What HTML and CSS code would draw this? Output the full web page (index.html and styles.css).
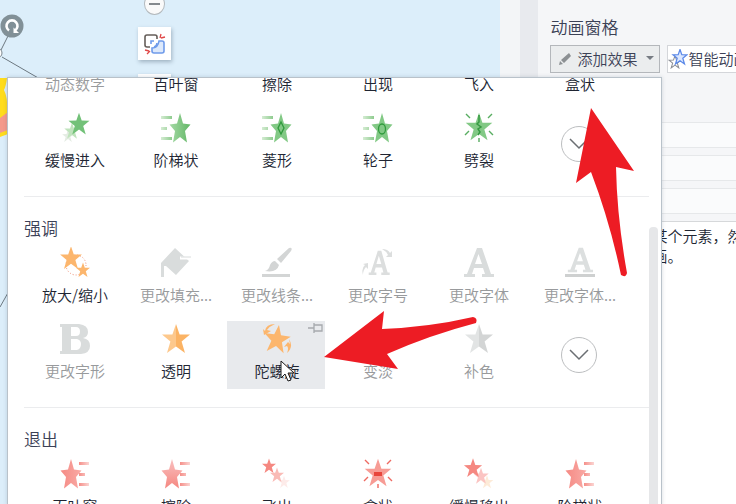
FILE: index.html
```
<!DOCTYPE html>
<html lang="zh-CN">
<head>
  <meta charset="UTF-8">
  <meta name="viewport" content="width=device-width, initial-scale=1.0">
  <title>动画窗格</title>
  <link rel="stylesheet" href="styles.css">
</head>
<body>
  <!-- shared shapes -->
  <svg class="defs" aria-hidden="true">
    <defs>
      <linearGradient id="green" x1="0" x2="1"><stop offset="0" stop-color="#a5d9a5"/><stop offset="1" stop-color="#62b766"/></linearGradient>
      <linearGradient id="orange" x1="0" x2="1"><stop offset=".5" stop-color="#fdc88c"/><stop offset=".5" stop-color="#fbb364"/></linearGradient>
      <linearGradient id="gray" x1="0" x2="1"><stop offset=".5" stop-color="#e2e4e4"/><stop offset=".5" stop-color="#d3d5d5"/></linearGradient>
      <linearGradient id="red" x1="0" x2="1"><stop offset="0" stop-color="#f58a84"/><stop offset="1" stop-color="#f9aaa5"/></linearGradient>
      <linearGradient id="redv" x1="0" y1="0" x2="0" y2="1"><stop offset="0" stop-color="#f9c0c0"/><stop offset="1" stop-color="#f58780"/></linearGradient>
      <linearGradient id="dash-in" gradientUnits="userSpaceOnUse" x1="1" x2="12"><stop offset="0" stop-color="#d5ecd3"/><stop offset="1" stop-color="#8fcc8f"/></linearGradient>
      <linearGradient id="dash-out" gradientUnits="userSpaceOnUse" x1="20" x2="31"><stop offset="0" stop-color="#f58f89"/><stop offset="1" stop-color="#fcdcda"/></linearGradient>
      <path id="star" d="M0 -15L3.6 -4.6L14 -4.4L5.6 2.6L9 14L0 7.4L-9 14L-5.6 2.6L-14 -4.4L-3.6 -4.6Z"/>
      <path id="narrow-star" d="M0 -15L3 -4.6L10.5 -3.6L5 3L7 14.5L0 9L-7 14.5L-5 3L-10.5 -3.6L-3 -4.6Z"/>
      <g id="lines-in" fill="url(#dash-in)"><path d="M1 4h11v3H1zM1 15h6v3H1zM1 25h11v3H1z"/></g>
      <g id="lines-out" fill="url(#dash-out)"><path d="M20 4h10v3H20zM20 15h6v3H20zM20 25h10v3H20z"/></g>
      <path id="rays" fill="none" stroke-width="1.4" d="M3 2l4 4M29 2l-4 4M2 23l4-4M30 23l-4-4M16 26v4"/>
      <path id="letter" d="M14 1h5l9 26h3v3H19v-3h3l-2-6H11l-2 6h3v3H1v-3h3zM15.500 7L12 17h7z"/>
    </defs>
  </svg>

  <main class="workspace">
    <section class="canvas">
      <svg class="slide-art" width="60" height="320" viewBox="0 0 60 320">
        <path d="M9 34L1 50M2 57L40 79M0 307L9 291" stroke="#6c7880" fill="none"/>
        <path d="M0 78h7q-1 8-3 12 4 8 3 20 2 12 1 24l-8 3z" fill="#ffdc1c"/>
        <path d="M0 118l8-6v18l-8 3z" fill="#f4998b"/>
        <circle cx="-3" cy="53" r="5" fill="#fff" stroke="#7a858c"/>
        <circle cx="12" cy="26" r="11.500" fill="#819097"/>
        <path d="M9 30.500A5.500 5.500 0 1 1 15 30.500" fill="none" stroke="#fff" stroke-width="2.600"/>
        <path d="M13.500 27.500v5.500h5.500z" fill="#fff"/>
      </svg>
      <div class="float-tools">
        <button class="minus" aria-label="缩小"></button>
        <button class="tool-card" aria-label="动画">
          <svg width="22" height="22" viewBox="0 0 22 22" fill="none">
            <path d="M6 14H3q-2 0-2-2V4q0-2 2-2h8q2 0 2 2v2" stroke="#655e59" stroke-width="1.600"/>
            <path d="M16 8h2q2 0 2 2v8q0 2-2 2h-8q-2 0-2-2v-3q6 0 7-7z" fill="#dde9fb" stroke="#6f9bea" stroke-width="1.600"/>
            <path d="M7 11V8h3M10 14q3-1 3-4" stroke="#6f9bea" stroke-width="1.600"/>
            <path d="M16 5l1-4M17 5l4-1M1 17l4 1M3 21l3-3" stroke="#e04848" stroke-width="1.300"/>
          </svg>
        </button>
        <div class="tool-card"></div>
      </div>
    </section>
    <div class="canvas-edge"></div>
    <div class="splitter"></div>

    <aside class="pane">
      <h1>动画窗格</h1>
      <div class="toolbar">
        <button class="add-effect">
          <svg width="14" height="14" viewBox="0 0 14 14"><path d="M1 13l1-4 3 3zM3 8l8-7 2 3-7 7z" fill="#8c9093"/></svg>
          <span>添加效果</span>
          <svg width="8" height="5" viewBox="0 0 8 5"><path d="M0 0h8L4 4z" fill="#777c83"/></svg>
        </button>
        <button class="smart">
          <svg width="20" height="20" viewBox="0 0 20 20">
            <use href="#star" transform="translate(7 13) scale(.42)" fill="#fff" stroke="#8c8f96" stroke-width="2.500"/>
            <use href="#star" transform="translate(12 8) scale(.5)" fill="#dce8ff" stroke="#5d8ae8" stroke-width="2.500"/>
          </svg>
          <span>智能动画</span>
        </button>
      </div>
      <div class="fields">
        <div class="field"></div>
        <div class="field"></div>
        <div class="field"></div>
      </div>
      <div class="hint">某个元素，然<br>画。</div>
    </aside>
  </main>

  <div class="popup">
    <div class="effects">
      <section class="group">
        <div class="grid">
          <button class="effect" disabled><span class="icon"></span>动态数字</button>
          <button class="effect"><span class="icon"></span>百叶窗</button>
          <button class="effect"><span class="icon"></span>擦除</button>
          <button class="effect"><span class="icon"></span>出现</button>
          <button class="effect"><span class="icon"></span>飞入</button>
          <button class="effect"><span class="icon"></span>盒状</button>
          <button class="effect">
            <svg class="icon" viewBox="0 0 32 32"><use href="#star" transform="translate(9 24) scale(.42)" fill="#e4ece3"/><use href="#star" transform="translate(13 19) scale(.55)" fill="#c0e3bd"/><use href="#star" transform="translate(20 12) scale(.75)" fill="#72c178"/></svg>
            缓慢进入
          </button>
          <button class="effect">
            <svg class="icon" viewBox="0 0 32 32"><use href="#lines-in"/><use href="#narrow-star" x="20" y="16" fill="url(#green)"/></svg>
            阶梯状
          </button>
          <button class="effect">
            <svg class="icon" viewBox="0 0 32 32"><use href="#lines-in"/><use href="#narrow-star" x="20" y="16" fill="#82c985"/><path d="M20 10l3 6-3 6-3-6z" fill="none" stroke="#2f9a3c" stroke-width="1.300"/></svg>
            菱形
          </button>
          <button class="effect">
            <svg class="icon" viewBox="0 0 32 32"><use href="#lines-in"/><use href="#narrow-star" x="20" y="16" fill="#82c985"/><ellipse cx="20" cy="17" rx="3.500" ry="5" fill="none" stroke="#2f9a3c" stroke-width="1.300"/></svg>
            轮子
          </button>
          <button class="effect">
            <svg class="icon" viewBox="0 0 32 32"><use href="#star" transform="translate(16 15) scale(.95)" fill="#82c985"/><path d="M16 3v7l-2 2 4 3-3 2 2 3-2 3" fill="none" stroke="#379a43" stroke-width="1.500"/><use href="#rays" stroke="#58ad61"/></svg>
            劈裂
          </button>
          <button class="more" aria-label="更多">
            <svg width="20" height="12" viewBox="0 0 20 12"><path d="M1 1l9 9 9-9" fill="none" stroke="#6b6f73" stroke-width="1.500"/></svg>
          </button>
        </div>
      </section>

      <section class="group">
        <h2>强调</h2>
        <div class="grid">
          <button class="effect">
            <svg class="icon" viewBox="0 0 32 32"><circle cx="17" cy="18" r="10" fill="none" stroke="#f08c70" stroke-dasharray="1 2"/><use href="#star" transform="translate(12 11) scale(.78)" fill="#fcb66d"/><use href="#star" transform="translate(24 23) scale(.5)" fill="#fcb66d"/></svg>
            放大/缩小
          </button>
          <button class="effect" disabled>
            <svg class="icon" viewBox="0 0 32 32"><path d="M15 1l14 13-13 14L6 19H4v11H1V16z" fill="#d9dcdc"/><path d="M20 11h11" stroke="#fff" stroke-width="3"/><path d="M21 10h10" stroke="#d9dcdc"/></svg>
            更改填充...
          </button>
          <button class="effect" disabled>
            <svg class="icon" viewBox="0 0 32 32"><path d="M28 1q4-1 2 3L20 16l-4-4zM14 14l4 4q-2 8-14 6 4-1 5-6 2-4 5-4zM1 27h28v3H1z" fill="#d3d5d5"/></svg>
            更改线条...
          </button>
          <button class="effect" disabled>
            <svg class="icon" viewBox="0 0 32 32" fill="#dcdede"><use href="#letter" transform="translate(6 3) scale(.7 .83)"/><path d="M20 2q6 0 8 4l2-2v6h-6l2-2q-2-4-6-6M1 28q-2-7 2-10l-2-1 5-1v6l-2-2q-3 3-3 8"/></svg>
            更改字号
          </button>
          <button class="effect" disabled>
            <svg class="icon" viewBox="0 0 32 32" fill="#d9dcdc"><use href="#letter"/></svg>
            更改字体
          </button>
          <button class="effect" disabled>
            <svg class="icon" viewBox="0 0 32 32" fill="#dcdfdf"><use href="#letter" transform="translate(3 0) scale(.84)"/><path d="M1 27h30v3H1z" fill="#ced0d0"/></svg>
            更改字体...
          </button>
          <button class="effect" disabled>
            <svg class="icon" viewBox="0 0 32 32"><path fill="#d9dcdc" fill-rule="evenodd" d="M1 1h19q9 1 9 8 0 5-5 6 7 1 7 8 0 7-9 8H1v-3h2V4H1zM12 4v9h5q4 0 4-4.500T17 4zM12 16v11h6q4-1 4-6 0-4-4-5z"/></svg>
            更改字形
          </button>
          <button class="effect">
            <svg class="icon" viewBox="0 0 32 32"><use href="#star" x="16" y="16" fill="url(#orange)"/></svg>
            透明
          </button>
          <button class="effect selected">
            <svg class="icon" viewBox="0 0 32 32" fill="#fcb66d"><use href="#star" transform="translate(16 16) rotate(8) scale(.95)"/><path d="M4 8Q5 1 14 1q-5 2-8 6l4 1-7 4-1-6zM28 16q5 8-2 14 2-5 0-7l-3 1 4-5 2 2z"/></svg>
            陀螺旋
            <svg class="pin" width="15" height="10" viewBox="0 0 15 10"><path d="M0 5h6M6 0v10M6 2h8v6H6" fill="none" stroke="#a6a9ad" stroke-width="1.300"/></svg>
          </button>
          <button class="effect" disabled>
            <svg class="icon" viewBox="0 0 32 32"><use href="#star" x="16" y="16" fill="url(#gray)"/></svg>
            变淡
          </button>
          <button class="effect" disabled>
            <svg class="icon" viewBox="0 0 32 32"><use href="#star" x="16" y="16" fill="url(#gray)"/></svg>
            补色
          </button>
          <button class="more" aria-label="更多">
            <svg width="20" height="12" viewBox="0 0 20 12"><path d="M1 1l9 9 9-9" fill="none" stroke="#6b6f73" stroke-width="1.500"/></svg>
          </button>
        </div>
      </section>

      <section class="group">
        <h2>退出</h2>
        <div class="grid">
          <button class="effect">
            <svg class="icon" viewBox="0 0 32 32"><use href="#lines-out"/><use href="#narrow-star" x="12" y="16" fill="url(#red)"/></svg>
            百叶窗
          </button>
          <button class="effect">
            <svg class="icon" viewBox="0 0 32 32"><use href="#lines-out"/><use href="#narrow-star" x="12" y="16" fill="url(#redv)"/></svg>
            擦除
          </button>
          <button class="effect">
            <svg class="icon" viewBox="0 0 32 32"><use href="#star" transform="translate(23 24) scale(.42)" fill="#fdebe9"/><use href="#star" transform="translate(16 17) scale(.5)" fill="#f9bbb6"/><use href="#star" transform="translate(8 8) scale(.5)" fill="#f58881"/></svg>
            飞出
          </button>
          <button class="effect">
            <svg class="icon" viewBox="0 0 32 32"><use href="#star" transform="translate(16 15) scale(.95)" fill="#f79c95"/><path d="M12 14h8v4h-8z" fill="#e8453c"/><use href="#rays" stroke="#ee6a62"/></svg>
            盒状
          </button>
          <button class="effect">
            <svg class="icon" viewBox="0 0 32 32"><use href="#star" transform="translate(24 24) scale(.45)" fill="#fdebd8"/><use href="#star" transform="translate(18 18) scale(.55)" fill="#fbc4c2"/><use href="#star" transform="translate(10 10) scale(.65)" fill="#f58881"/></svg>
            缓慢移出
          </button>
          <button class="effect">
            <svg class="icon" viewBox="0 0 32 32"><use href="#lines-out"/><use href="#narrow-star" x="12" y="16" fill="url(#red)"/></svg>
            阶梯状
          </button>
        </div>
      </section>
    </div>
    <div class="scrollbar"><div class="thumb"></div></div>
  </div>

  <!-- callout arrows and the mouse pointer -->
  <svg class="marks" width="736" height="504" viewBox="0 0 736 504">
    <g fill="#ed1c24">
      <path d="M591 108L634 171L616 167Q617 218 627 273Q626 278 621 275Q610 222 591 172L576 183Z"/>
      <path d="M324 357L384 311L382 329Q430 327 473 317Q478 318 476 323Q430 335 387 354L398 369Z"/>
    </g>
    <path d="M281 361v17l4-4 3 7 3-1-3-7h6z" fill="#fff" stroke="#1b1b1b"/>
  </svg>
</body>
</html>
```

FILE: styles.css
```
* {
  box-sizing: border-box;
}
body {
  margin: 0;
  height: 100vh;
  overflow: hidden;
  position: relative;
  font-family: "Noto Sans CJK SC", sans-serif;
  font-size: 15px;
  font-weight: 350;
  color: #202532;
}
button {
  font: inherit;
  color: inherit;
  margin: 0;
  padding: 0;
  border: none;
  background: none;
}
h1, h2 {
  margin: 0;
  font-size: 17px;
  font-weight: inherit;
  line-height: 28px;
  color: #3b4156;
}
.defs {
  position: absolute;
  width: 0;
  height: 0;
}
.workspace {
  display: flex;
  height: 100%;
}

/* slide canvas */
.canvas {
  flex: 0 0 68%;
  display: flex;
  background: #dceefa;
}
.slide-art {
  flex: none;
}
.float-tools {
  display: flex;
  flex-direction: column;
  align-items: center;
  gap: 14px;
  margin: -7px 0 0 78px;
}
.minus {
  display: flex;
  flex: none;
  align-items: center;
  justify-content: center;
  width: 21px;
  height: 22px;
  margin-bottom: -2px;
  border: 1px solid #b3b9bd;
  border-radius: 50%;
  background: #fafafa;
}
.minus::before {
  content: "";
  width: 11px;
  height: 2px;
  background: #858a8e;
}
.tool-card {
  display: flex;
  flex: none;
  align-items: center;
  justify-content: center;
  width: 33px;
  height: 33px;
  background: #fff;
  box-shadow: 1px 2px 4px rgba(70, 90, 110, 0.4);
}
.canvas-edge {
  flex: 0 0 20px;
  background: #f3f5f7;
}
.splitter {
  flex: 0 0 18px;
  background: #e8eaee;
}

/* animation pane */
.pane {
  flex: 1;
  display: flex;
  flex-direction: column;
  min-width: 0;
  padding: 13px 0 0 12px;
  overflow: hidden;
  background: #f5f6f8;
}
.toolbar {
  display: flex;
  gap: 7px;
  margin-top: 4px;
  color: #3b4156;
}
.add-effect, .smart {
  display: flex;
  flex: none;
  align-items: center;
  height: 28px;
  padding-bottom: 1px;
  border: 1px solid #b4b7bb;
  background: #ebedee;
}
.add-effect {
  gap: 5px;
  width: 110px;
  padding-left: 7px;
}
.add-effect svg:last-child {
  margin-left: 4px;
}
.smart {
  width: 96px;
  border-color: #d4d6da;
  background: #fff;
}
.fields {
  display: flex;
  flex-direction: column;
  gap: 7px;
  margin-top: 49px;
}
.field {
  height: 26px;
  border: 1px solid #e6e8ea;
  border-right: none;
  background: #fafbfc;
}
.hint {
  flex: 1;
  margin-top: 7px;
  padding: 4px 0 0 102px;
  border-top: 1px solid #d6d8da;
  background: #fff;
  line-height: 20px;
  white-space: nowrap;
}

/* effect list */
.popup {
  position: absolute;
  top: 77px;
  bottom: -2px;
  left: 7px;
  right: 74px;
  display: flex;
  overflow: hidden;
  border: 1px solid #b9c2ca;
  background: #fff;
  box-shadow: 0 0 4px rgba(60, 80, 100, 0.2);
}
.effects {
  flex: 1;
  margin-top: -44px;
  padding-left: 16px;
}
.group {
  padding-bottom: 18px;
  border-bottom: 1px solid #ebecee;
}
.group h2 {
  padding: 17px 0 3px;
}
.grid {
  display: grid;
  grid-template-columns: repeat(6, 98px);
  gap: 8px 3px;
  padding-left: 1px;
}
.effect {
  display: flex;
  flex-direction: column;
  align-items: center;
  height: 68px;
  padding: 2px 0 0 2px;
  position: relative;
  line-height: 22px;
  white-space: nowrap;
}
.effect:disabled {
  color: #989a9c;
}
.effect.selected {
  background: #e8eaed;
}
.icon {
  flex: none;
  width: 32px;
  height: 32px;
  margin-bottom: 5px;
}
.pin {
  position: absolute;
  top: 2px;
  right: 2px;
}
.more {
  display: flex;
  align-items: center;
  justify-content: center;
  align-self: center;
  justify-self: center;
  width: 36px;
  height: 36px;
  border: 1px solid #bcbec0;
  border-radius: 50%;
}
.scrollbar {
  flex: none;
  width: 12px;
  padding: 149px 3px 0 0;
}
.thumb {
  height: 100%;
  border-radius: 4px 4px 0 0;
  background: #e6e7e9;
}

.marks {
  position: absolute;
  top: 0;
  left: 0;
  pointer-events: none;
}
```
